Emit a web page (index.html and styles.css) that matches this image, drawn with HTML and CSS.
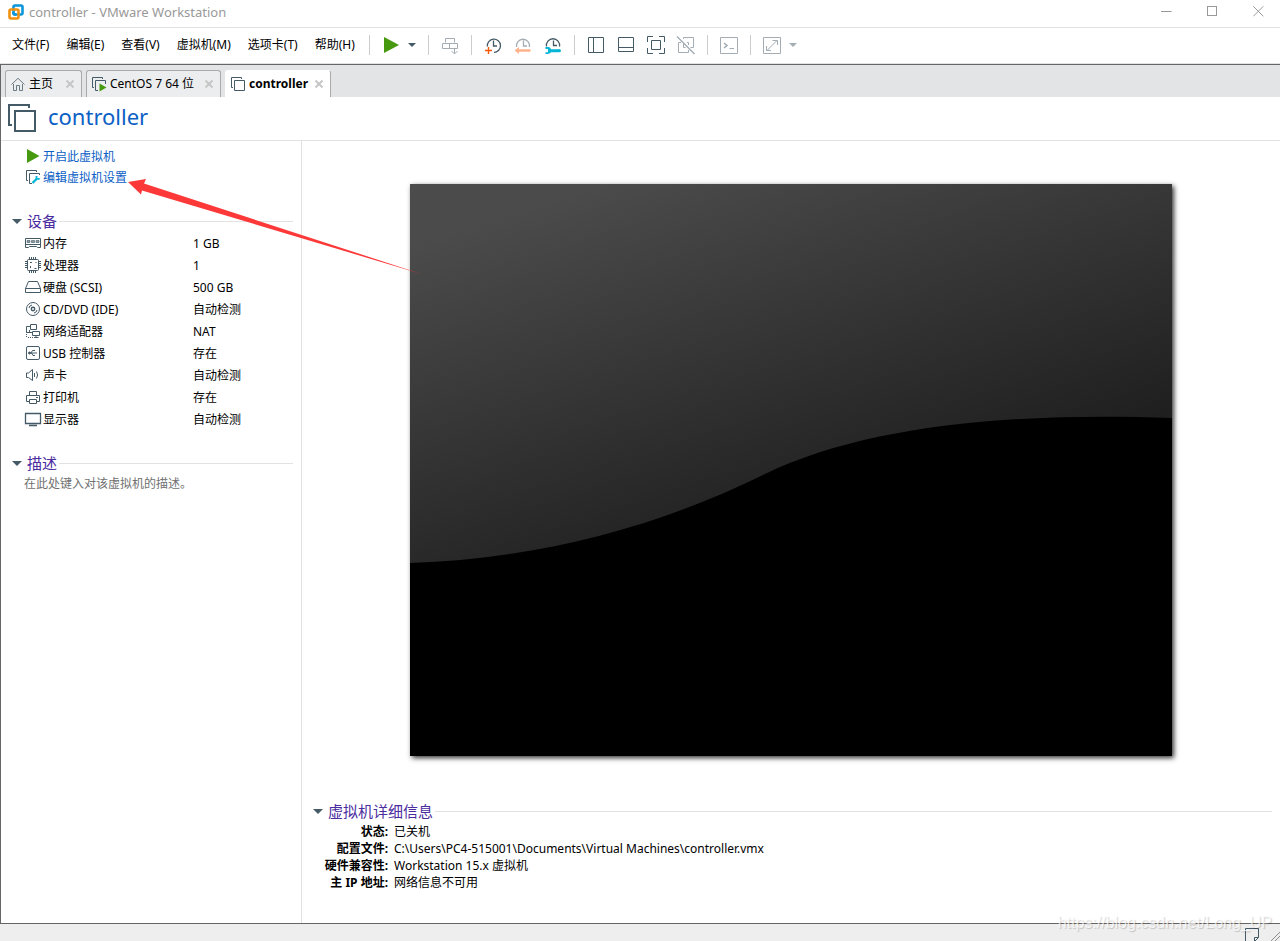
FILE: index.html
```html
<!DOCTYPE html>
<html lang="zh-CN">
<head>
<meta charset="utf-8">
<meta name="viewport" content="width=device-width, initial-scale=1">
<title>controller - VMware Workstation</title>
<link rel="stylesheet" href="styles.css">
</head>
<body>
<div class="window">
  <header class="titlebar">
    <svg class="logo" width="16" height="16" viewBox="0 0 16 16" fill="none" aria-hidden="true">
      <rect x="5.5" y="1.5" width="9" height="9" rx="1.5" stroke="#0c95d8" stroke-width="2.6"/>
      <rect x="1.5" y="5.5" width="9" height="9" rx="1.5" stroke="#f0910f" stroke-width="2.6"/>
      <path d="M5.5 8V9Q5.500 10.500 7 10.500H8" stroke="#0c95d8" stroke-width="2.600"/>
    </svg>
    <span class="title">controller - VMware Workstation</span>
    <div class="caption">
      <button type="button" aria-label="最小化"><svg width="11" height="11" viewBox="0 0 11 11"><path d="M0 5.500H10.500"/></svg></button>
      <button type="button" aria-label="最大化"><svg width="11" height="11" viewBox="0 0 11 11"><rect x=".5" y=".5" width="9" height="9"/></svg></button>
      <button type="button" aria-label="关闭"><svg width="11" height="11" viewBox="0 0 11 11"><path d="M.3.3 10.300 10.300M10.300.3.3 10.300"/></svg></button>
    </div>
  </header>

  <div class="menubar">
    <nav class="menus" aria-label="菜单">
      <button type="button">文件(F)</button>
      <button type="button">编辑(E)</button>
      <button type="button">查看(V)</button>
      <button type="button">虚拟机(M)</button>
      <button type="button">选项卡(T)</button>
      <button type="button">帮助(H)</button>
    </nav>
    <div class="tools" role="toolbar" aria-label="工具">
      <span class="sep"></span>
      <button type="button" class="tool power" aria-label="开机"><svg width="16" height="16" viewBox="0 0 16 16"><path d="M1 0V16L16 8Z" fill="#47990f"/></svg></button>
      <button type="button" class="tool drop" aria-label="电源选项"><svg width="8" height="4" viewBox="0 0 8 4"><path d="M0 0H8L4 4Z" fill="#455a67"/></svg></button>
      <span class="sep"></span>
      <button type="button" class="tool" aria-label="发送 Ctrl+Alt+Del" disabled><svg class="line faded" width="20" height="20" viewBox="0 0 20 20"><path d="M5.500 7.500V3.500H14.500V7.500M2.500 8.500H9.500V13.500H2.500ZM9.500 8.500H17.500V13.500H9.500ZM14.500 13V18.500M11.500 16 14.500 19 17.500 16"/></svg></button>
      <span class="sep"></span>
      <button type="button" class="tool" aria-label="拍摄快照"><svg class="line bold" width="20" height="20" viewBox="0 0 20 20"><path d="M4.300 11.500A6.600 6.600 0 1 1 11 17.400M10.500 5.500V11H14"/><path d="M5.500 12V19M2 15.500H9" stroke="#f5570b" stroke-width="1.400"/></svg></button>
      <button type="button" class="tool" aria-label="恢复快照" disabled><svg class="line bold faded" width="20" height="20" viewBox="0 0 20 20"><path d="M3.500 12A6.600 6.600 0 1 1 16.500 12M10.500 5.500V11H14"/><path d="M1.500 15.500 6 12V14.300H17.500V16.700H6V19Z" fill="#ffb38d" stroke="none"/></svg></button>
      <button type="button" class="tool" aria-label="管理快照"><svg class="line bold" width="20" height="20" viewBox="0 0 20 20"><path d="M3.500 11.500A6.600 6.600 0 1 1 16.500 11.500M10.500 5.500V10.500H14"/><path d="M2.500 12H5.500Q7.500 12.300 8 14.200H14.500Q18 13.500 18 15.700T14.500 17.200H8Q7 19 4.500 19H2.500V17.200H5V14H2.500Z" fill="#04b5d8" stroke="none"/></svg></button>
      <span class="sep"></span>
      <button type="button" class="tool" aria-label="显示库"><svg class="line" width="20" height="20" viewBox="0 0 20 20"><path d="M2.500 2.500H17.500V17.500H2.500ZM7.500 2.500V17.500"/></svg></button>
      <button type="button" class="tool" aria-label="缩略图栏"><svg class="line" width="20" height="20" viewBox="0 0 20 20"><path d="M2.500 2.500H17.500V16.500H2.500ZM2.500 12.500H17.500"/></svg></button>
      <button type="button" class="tool" aria-label="全屏"><svg class="line" width="20" height="20" viewBox="0 0 20 20"><path d="M1.500 7V1.500H7M13 1.500H18.500V7M18.500 13V18.500H13M7 18.500H1.500V13M5.500 5.500H14.500V14.500H5.500Z"/></svg></button>
      <button type="button" class="tool" aria-label="Unity" disabled><svg class="line faded" width="20" height="20" viewBox="0 0 20 20"><path d="M7.500 4V2.500H17.500V12.500H14.500M11 7.500H12.500V10M5 7.500H2.500V17.500H12.500V15M7.500 9V12.500H9.500"/><path d="M1 1.500 18.500 19" stroke-width="1.400"/></svg></button>
      <span class="sep"></span>
      <button type="button" class="tool" aria-label="控制台" disabled><svg class="line faded" width="20" height="20" viewBox="0 0 20 20"><path d="M1.500 2.500H18.500V18.500H1.500ZM10.500 13.500H15"/><path d="M5 8 8 10.500 5 13" stroke-width="1.600"/></svg></button>
      <span class="sep"></span>
      <button type="button" class="tool" aria-label="自动调整" disabled><svg class="line faded" width="20" height="20" viewBox="0 0 20 20"><path d="M1.500 2.500H18.500V18.500H1.500Z"/><path d="M5 15.500 15 5.500M10.500 5.500H15.500V10M4.500 11V15.500H9"/></svg></button>
      <button type="button" class="tool drop" aria-label="调整选项" disabled><svg width="8" height="4" viewBox="0 0 8 4"><path d="M0 0H8L4 4Z" fill="#a4adb4"/></svg></button>
    </div>
  </div>

  <main class="frame">
    <div class="tabs" role="tablist">
      <div class="tab">
        <button type="button" role="tab" class="pick"><svg class="line slate" width="16" height="16" viewBox="0 0 16 16"><path d="M1.500 8.500 8 2.300 14.500 8.500M3.500 8V14.500H6.500V9.500H9.500V14.500H12.500V8"/></svg>主页</button>
        <button type="button" class="close" aria-label="关闭主页"><svg width="8" height="8" viewBox="0 0 8 8"><path d="M.5.5 7.500 7.500M7.500.5.5 7.500"/></svg></button>
      </div>
      <div class="tab wide">
        <button type="button" role="tab" class="pick"><svg class="line" width="16" height="16" viewBox="0 0 16 16"><path d="M3 11.500H1.500V1.500H11.500V3M7 14.500H4.500V4.500H14.500V8"/><path d="M8.500 7.500V15.500L15.500 11.500Z" fill="#47990f" stroke="none"/></svg>CentOS 7 64 位</button>
        <button type="button" class="close" aria-label="关闭 CentOS 7 64 位"><svg width="8" height="8" viewBox="0 0 8 8"><path d="M.5.5 7.500 7.500M7.500.5.5 7.500"/></svg></button>
      </div>
      <div class="tab active">
        <button type="button" role="tab" class="pick" aria-selected="true"><svg class="line" width="16" height="16" viewBox="0 0 16 16"><path d="M3 11.500H1.500V1.500H11.500V3M4.500 4.500H14.500V14.500H4.500Z"/></svg>controller</button>
        <button type="button" class="close" aria-label="关闭 controller"><svg width="8" height="8" viewBox="0 0 8 8"><path d="M.5.5 7.500 7.500M7.500.5.5 7.500"/></svg></button>
      </div>
    </div>

    <div class="heading">
      <svg width="28" height="28" viewBox="0 0 28 28" fill="none" stroke="#455a67" stroke-width="2" aria-hidden="true"><path d="M4 21H1V1H21V4M7 7H27V27H7Z"/></svg>
      <h1>controller</h1>
    </div>

    <div class="body">
      <aside class="side">
        <ul class="actions">
          <li><svg width="16" height="16" viewBox="0 0 16 16"><path d="M2 1V15L14.500 8Z" fill="#47990f"/></svg><a href="#start">开启此虚拟机</a></li>
          <li><svg class="line" width="16" height="16" viewBox="0 0 16 16"><path d="M3 11.500H1.500V1.500H11.500V3M7 14.500H4.500V4.500H14.500V6"/><path d="M7.500 14 11.500 10" stroke="#04b5d8" stroke-width="2.400"/><path d="M11.500 7 11.500 9.800 14.700 9.800" stroke="#04b5d8" stroke-width="1.800"/></svg><a href="#settings">编辑虚拟机设置</a></li>
        </ul>

        <section class="group">
          <h2><svg width="10" height="5" viewBox="0 0 10 5"><path d="M0 0H10L5 5Z" fill="#455a67"/></svg>设备</h2>
          <table class="devices">
            <tr><th scope="row"><span><svg class="line" width="18" height="16" viewBox="0 0 18 16"><path d="M1.500 3.500H16.500V12.500H13.500L12.500 11.500H5.500L4.500 12.500H1.500ZM1.500 9.500H16.500"/><path d="M3 5.500H6V7.500H3ZM7.500 5.500H10.500V7.500H7.500ZM12 5.500H15V7.500H12Z" fill="#8f9ca4" stroke-width=".6"/></svg>内存</span></th><td>1 GB</td></tr>
            <tr><th scope="row"><span><svg class="line" width="18" height="16" viewBox="0 0 18 16"><rect x="3.500" y="2.500" width="11" height="11" rx="1"/><path d="M5.500 0V2M7.500 0V2M9.500 0V2M11.500 0V2M5.500 14V16M7.500 14V16M9.500 14V16M11.500 14V16M1 4.500H3M1 6.500H3M1 8.500H3M1 10.500H3M15 4.500H17M15 6.500H17M15 8.500H17M15 10.500H17M6 5.500H8M10.500 11.500H12.500M6.500 11V9M12 5V6"/></svg>处理器</span></th><td>1</td></tr>
            <tr><th scope="row"><span><svg class="line" width="18" height="16" viewBox="0 0 18 16"><path d="M4.500 2.500H13.500L16.500 9.500V13.500H1.500V9.500ZM1.500 9.500H16.500"/></svg>硬盘 (SCSI)</span></th><td>500 GB</td></tr>
            <tr><th scope="row"><span><svg class="line" width="18" height="16" viewBox="0 0 18 16"><circle cx="9" cy="8" r="6.500"/><circle cx="9" cy="8" r="1.700" stroke-width="1.400"/><path d="M5 7Q5.300 4.500 8 4M10 12Q12.700 11.500 13 9"/></svg>CD/DVD (IDE)</span></th><td>自动检测</td></tr>
            <tr><th scope="row"><span><svg class="line" width="18" height="16" viewBox="0 0 18 16"><path d="M6.500 1.500H12.500V6.500H6.500ZM5 9.500H2.500V3.500H6M8.500 8.500H15.500V12.500H8.500ZM12 13V15M10 14.500H14.500M2.500 9.500H8M5.500 7V9"/><path d="M2.500 11V15M4 14.500H10" stroke-dasharray="1 1"/></svg>网络适配器</span></th><td>NAT</td></tr>
            <tr><th scope="row"><span><svg class="line" width="18" height="16" viewBox="0 0 18 16"><rect x="2.500" y="1.500" width="13" height="13" rx="1.500"/><path d="M5 8H13M7 8 8.500 5.500H11M7.500 8 9 10.500H11"/><circle cx="5.500" cy="8" r="1" fill="#455a67"/></svg>USB 控制器</span></th><td>存在</td></tr>
            <tr><th scope="row"><span><svg class="line" width="18" height="16" viewBox="0 0 18 16"><path d="M2.500 6H4.500L8.500 2.500V13.500L4.500 10.500H2.500ZM10.500 6V10M12.500 4.500Q14.700 8 12.500 11.500"/></svg>声卡</span></th><td>自动检测</td></tr>
            <tr><th scope="row"><span><svg class="line" width="18" height="16" viewBox="0 0 18 16"><path d="M5.500 6V2.500H12.500V6M5 12.500H2.500V6.500H15.500V12.500H13M5.500 10.500H12.500V14.500H5.500ZM12 8.500H14"/></svg>打印机</span></th><td>存在</td></tr>
            <tr><th scope="row"><span><svg class="line" width="18" height="16" viewBox="0 0 18 16"><path d="M1.500 2.500H16.500V12.500H1.500ZM5 14.500H13" stroke-width="1.300"/></svg>显示器</span></th><td>自动检测</td></tr>
          </table>
        </section>

        <section class="group">
          <h2><svg width="10" height="5" viewBox="0 0 10 5"><path d="M0 0H10L5 5Z" fill="#455a67"/></svg>描述</h2>
          <p class="note">在此处键入对该虚拟机的描述。</p>
        </section>
      </aside>

      <section class="detail">
        <div class="screen">
          <svg viewBox="0 0 762 572" role="img" aria-label="虚拟机屏幕">
            <defs><linearGradient id="glass" gradientUnits="userSpaceOnUse" x1="100" y1="30" x2="227" y2="428"><stop offset="0" stop-color="#4b4b4b"/><stop offset="1" stop-color="#1c1c1c"/></linearGradient></defs>
            <rect width="762" height="572" fill="#000"/>
            <path d="M0 0H762V234C600 228 455 242 355 290C250 342 130 375 0 379Z" fill="url(#glass)"/>
          </svg>
        </div>
        <section class="info">
          <h2><svg width="10" height="5" viewBox="0 0 10 5"><path d="M0 0H10L5 5Z" fill="#455a67"/></svg>虚拟机详细信息</h2>
          <dl>
            <dt>状态:</dt><dd>已关机</dd>
            <dt>配置文件:</dt><dd>C:\Users\PC4-515001\Documents\Virtual Machines\controller.vmx</dd>
            <dt>硬件兼容性:</dt><dd>Workstation 15.x 虚拟机</dd>
            <dt>主 IP 地址:</dt><dd>网络信息不可用</dd>
          </dl>
        </section>
      </section>
    </div>
  </main>

  <footer class="status">
    <svg width="14" height="14" viewBox="0 0 14 14" fill="none" stroke="#455a67" aria-hidden="true"><path d="M.5.5H13.500V9.500L9.500 13.500H.5ZM9.500 13.500V9.500H13.500"/></svg>
    <svg width="9" height="9" viewBox="0 0 9 9" fill="none" stroke="#8c8c8c" aria-hidden="true"><path d="M0 9 9 0M4 9 9 4"/></svg>
  </footer>

  <svg class="arrow" width="300" height="100" viewBox="0 0 300 100" aria-hidden="true"><path d="M0 4 18 1 16 5.500 295 96.500 14 12.500 13 16.500Z" fill="#fd3838"/></svg>
  <span class="watermark">https://blog.csdn.net/Long_UP</span>
</div>
</body>
</html>
```
FILE: styles.css
```css
* { box-sizing: border-box; }

body {
  margin: 0;
  background: #fff;
  color: #000;
  font: 12px/16px "Noto Sans", "Noto Sans CJK SC", sans-serif;
}

button {
  display: flex;
  align-items: center;
  justify-content: center;
  margin: 0;
  padding: 0;
  border: 0;
  background: none;
  color: inherit;
  font: inherit;
}

h1, h2, p, ul, dl, dd { margin: 0; padding: 0; }
svg { flex: none; display: block; }

.line { fill: none; stroke: #455a67; stroke-width: 1; }
.bold { stroke-width: 1.3; }
.faded { stroke: #a4adb4; }
.slate { stroke: #6b7b86; }

.window {
  position: relative;
  display: flex;
  flex-direction: column;
  min-height: 100vh;
  overflow: hidden;
}

.titlebar {
  display: flex;
  align-items: center;
  gap: 5px;
  height: 28px;
  padding: 0 0 4px 8px;
  border-bottom: 1px solid #e2e2e2;
}
.title { color: #999; font-size: 13px; }
.caption { display: flex; gap: 3px; margin-left: auto; }
.caption button { width: 43px; height: 23px; }
.caption svg { fill: none; stroke: #999; }

.menubar {
  display: flex;
  align-items: center;
  height: 36px;
  padding-bottom: 2px;
  border-bottom: 1px solid #e2e2e2;
}
.menus { display: flex; gap: 17px; padding-left: 12px; white-space: nowrap; }
.tools { display: flex; align-items: center; margin-left: 14px; }
.sep { width: 1px; height: 20px; background: #ccc; }
.tool { width: 30px; height: 20px; }
.sep + .tool { margin-left: 6px; }
.tool:has(+ .sep) { margin-right: 6px; }
.drop { width: 12px; }
.drop:has(+ .sep) { margin-right: 10px; }

.frame {
  flex: 1;
  display: flex;
  flex-direction: column;
  border: 1px solid #666;
  border-right: 0;
}

.tabs {
  display: flex;
  align-items: flex-end;
  gap: 4px;
  height: 32px;
  padding: 0 4px;
  background: #e2e4e6;
}
.tab {
  display: flex;
  align-items: center;
  justify-content: space-between;
  width: 77px;
  height: 27px;
  padding: 0 7px 0 4px;
  border: 1px solid #aaa;
  border-bottom: 0;
  border-radius: 3px 3px 0 0;
  background: #ecedee;
}
.tab.wide { width: 135px; }
.tab.active { width: 106px; background: #fff; border-color: #fff #aaa #fff #fff; font-weight: bold; }
.pick { gap: 3px; white-space: nowrap; }
.close svg { fill: none; stroke: #c6c6c6; stroke-width: 2; }

.heading {
  display: flex;
  align-items: center;
  gap: 12px;
  height: 44px;
  padding: 0 0 2px 7px;
  border-bottom: 1px solid #e2e2e2;
}
h1 { color: #0b60c5; font-size: 22px; line-height: 28px; font-weight: normal; padding-bottom: 4px; }

.body { flex: 1; display: grid; grid-template-columns: 301px 1fr; }

.side { padding: 5px 8px 0 11px; border-right: 1px solid #e2e2e2; }

.actions { list-style: none; padding-left: 13px; margin-bottom: 22px; }
.actions li { display: flex; align-items: center; gap: 2px; height: 21px; }
.actions svg, .devices svg { margin-bottom: 2px; }
a { color: #0b60c5; text-decoration: none; }

h2 {
  display: flex;
  align-items: center;
  gap: 5px;
  margin-bottom: 1px;
  color: #4b2da0;
  font-size: 15px;
  line-height: 22px;
  font-weight: normal;
  white-space: nowrap;
}
h2::after { content: ""; flex: 1; height: 1px; margin-left: -3px; background: #e2e2e2; }

.group { margin-bottom: 21px; }
.devices { border-collapse: collapse; margin-left: 12px; }
.devices th, .devices td { height: 22px; padding: 0; font-weight: normal; text-align: left; }
.devices th { width: 169px; }
.devices th span { display: flex; align-items: center; gap: 1px; }
.note { padding-left: 12px; color: #707070; line-height: 18px; }

.detail { display: flex; flex-direction: column; }
.screen { padding: 43px 108px; }
.screen svg { width: 100%; height: auto; box-shadow: 2px 2px 5px #333; }

.info { padding: 1px 8px 0 11px; }
dl { display: grid; grid-template-columns: 75px 1fr; column-gap: 6px; line-height: 17px; }
dt { font-weight: bold; text-align: right; white-space: nowrap; }

.status {
  display: flex;
  align-items: flex-end;
  justify-content: flex-end;
  gap: 12px;
  height: 17px;
  background: #eee;
}
.status svg:first-child { margin-bottom: -1px; }

.arrow { position: absolute; left: 128px; top: 178px; }
.watermark {
  position: absolute;
  right: 8px;
  bottom: 8px;
  color: rgba(255, 255, 255, 0.7);
  font: 16px/20px "Liberation Sans", sans-serif;
  text-shadow: 1px 1px 1px rgba(0, 0, 0, 0.18);
}
```
